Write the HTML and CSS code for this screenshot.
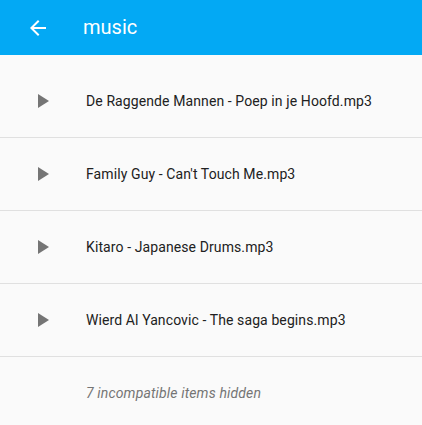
FILE: index.html
```html
<!DOCTYPE html>
<html lang="en">
<head>
  <meta charset="UTF-8"/>
  <meta name="viewport" content="width=device-width,initial-scale=1"/>
  <title>music</title>
  <link rel="stylesheet" href="styles.css">
</head>
<body>
  <header class="toolbar">
    <button class="back" aria-label="Back">
      <svg viewBox="0 0 24 24" width="24" height="24"><path d="M20 11H7.83l5.59-5.59L12 4l-8 8 8 8 1.41-1.41L7.83 13H20v-2z"/></svg>
    </button>
    <h1>music</h1>
  </header>

  <ul class="files">
    <li class="file">
      <svg class="play" viewBox="0 0 24 24" width="24" height="24"><path d="M8 5v14l11-7z"/></svg>
      <span>De Raggende Mannen - Poep in je Hoofd.mp3</span>
    </li>
    <li class="file">
      <svg class="play" viewBox="0 0 24 24" width="24" height="24"><path d="M8 5v14l11-7z"/></svg>
      <span>Family Guy - Can't Touch Me.mp3</span>
    </li>
    <li class="file">
      <svg class="play" viewBox="0 0 24 24" width="24" height="24"><path d="M8 5v14l11-7z"/></svg>
      <span>Kitaro - Japanese Drums.mp3</span>
    </li>
    <li class="file">
      <svg class="play" viewBox="0 0 24 24" width="24" height="24"><path d="M8 5v14l11-7z"/></svg>
      <span>Wierd Al Yancovic - The saga begins.mp3</span>
    </li>
    <li class="hidden-note">7 incompatible items hidden</li>
  </ul>
</body>
</html>
```

FILE: styles.css
```css
:root {
  --bg: #fafafa;
  --accent: #03a9f4;
  --text: #212121;
  --muted: #757575;
  --divider: #e0e0e0;
}
* { box-sizing: border-box; margin: 0; padding: 0 }
body {
  background: var(--bg);
  font-family: Roboto, "Noto Sans", sans-serif;
  color: var(--text);
}
.toolbar {
  height: 55px;
  background: var(--accent);
  display: flex;
  align-items: center;
  padding-left: 26px;
  color: #fff;
}
.back {
  background: none;
  border: none;
  width: 24px;
  height: 24px;
  fill: #fff;
  display: flex;
}
.toolbar h1 {
  font-size: 20px;
  font-weight: 400;
  margin-left: 33px;
  margin-top: -1px;
}
.files {
  list-style: none;
  padding-top: 10px;
}
.file {
  height: 73px;
  display: flex;
  align-items: center;
  padding-left: 30px;
  border-bottom: 1px solid var(--divider);
  font-size: 14px;
  letter-spacing: 0.1px;
}
.play {
  fill: #757575;
  margin-right: 32px;
  flex: none;
}
.hidden-note {
  height: 72px;
  display: flex;
  align-items: center;
  padding-left: 86px;
  font-size: 14px;
  font-style: italic;
  letter-spacing: 0.15px;
  color: var(--muted);
}
```
